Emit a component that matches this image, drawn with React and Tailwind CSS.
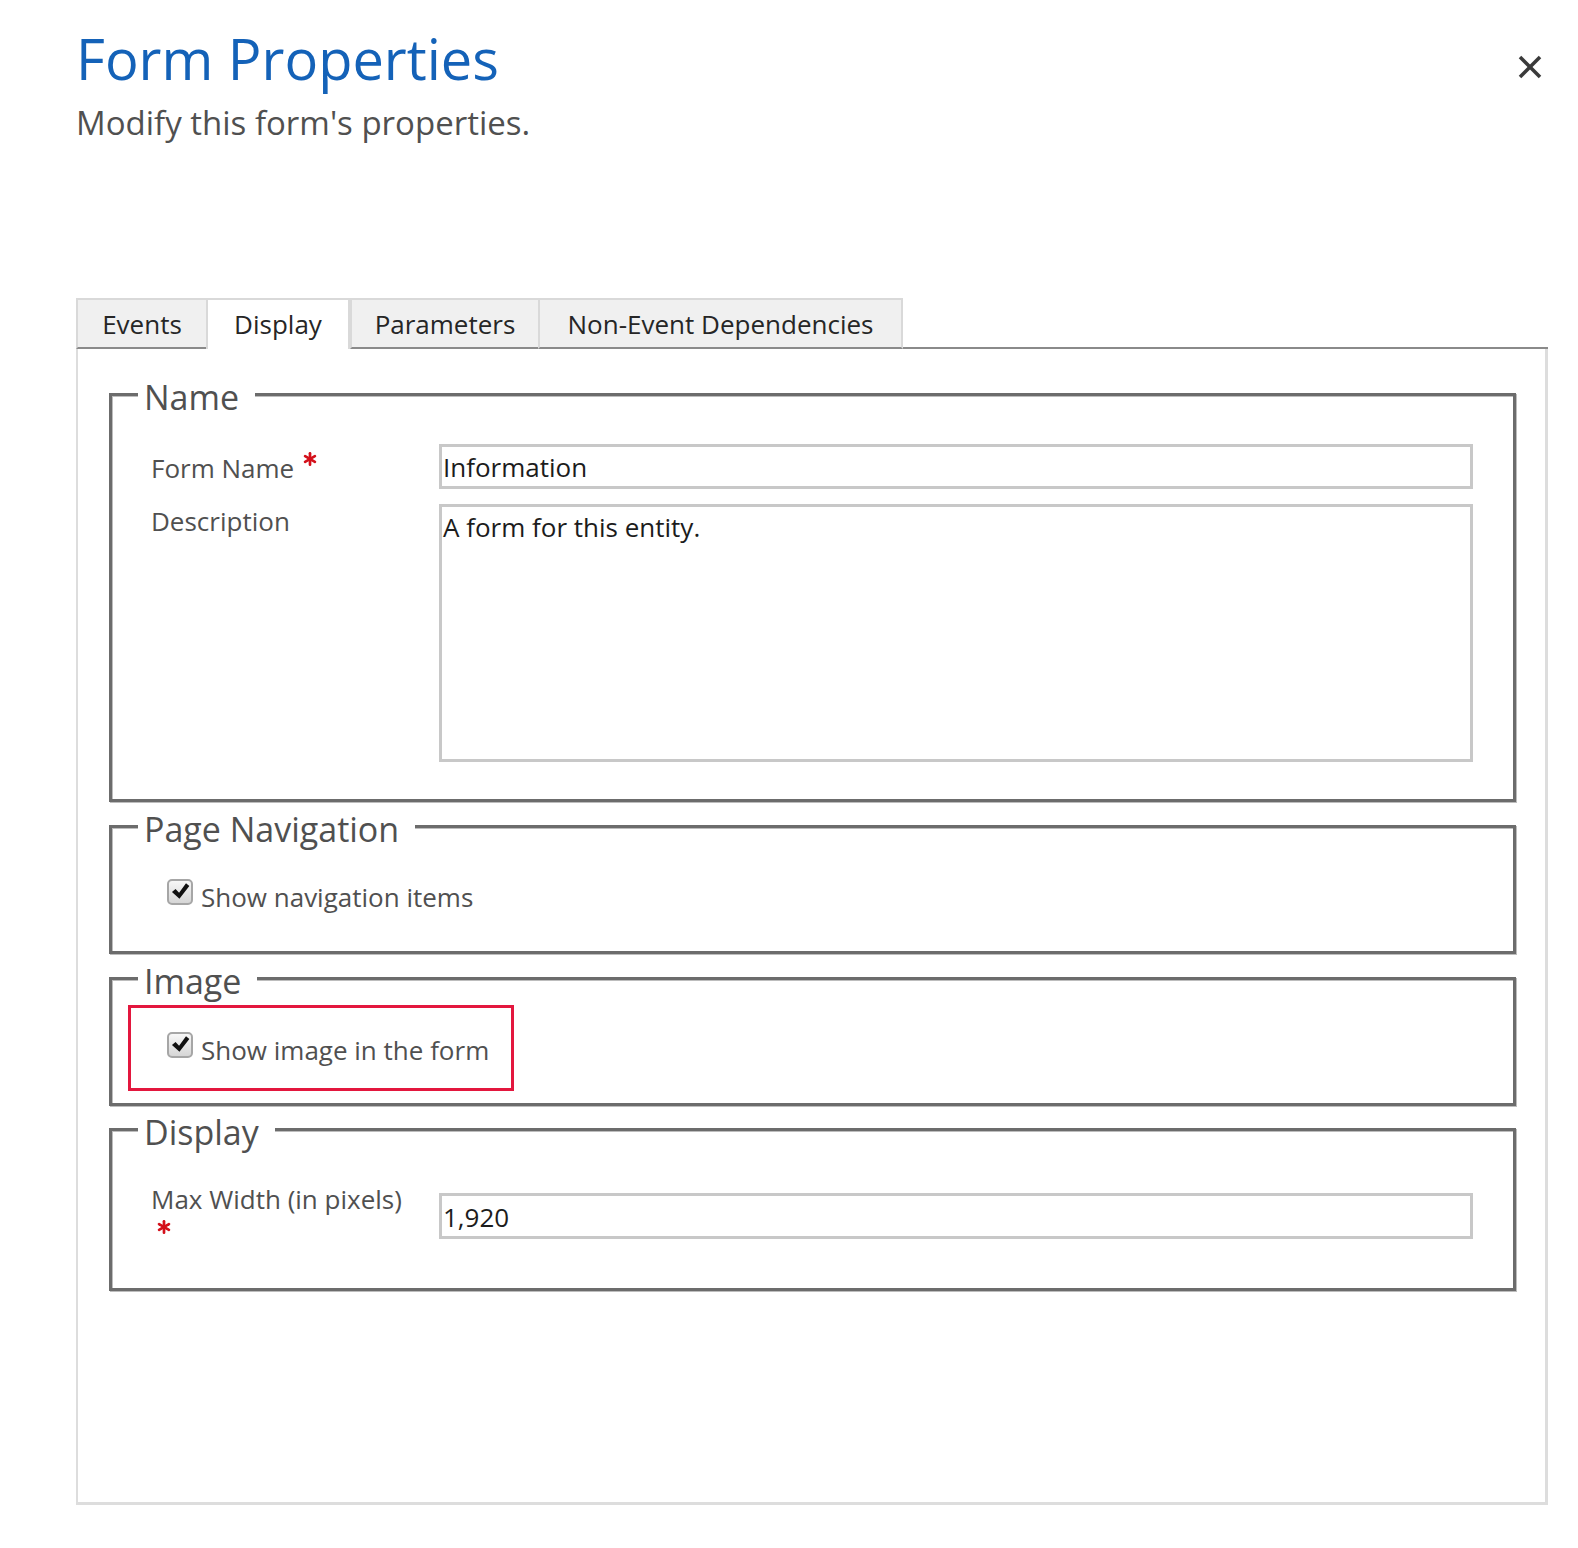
import React from "react";

function Asterisk({ className = "" }) {
  return (
    <svg className={className} width="14" height="14" viewBox="0 0 14 14">
      <g stroke="#d4111b" strokeWidth="2.7" strokeLinecap="round">
        <line x1="7" y1="1.3" x2="7" y2="12.7" />
        <line x1="2.1" y1="4.15" x2="11.9" y2="9.85" />
        <line x1="2.1" y1="9.85" x2="11.9" y2="4.15" />
      </g>
    </svg>
  );
}

function CheckBox() {
  return (
    <div className="w-[26px] h-[26px] shrink-0 rounded-[5px] border-2 border-[#a6a6a6] bg-[linear-gradient(#f7f7f7,#d6d6d6)] flex items-center justify-center">
      <svg width="19" height="19" viewBox="0 0 20 20" className="-mt-[2px]">
        <path d="M1 10.6 L4.8 7.4 L8.5 11.2 L15.8 1.4 L19.3 4.2 L8.9 17.6 Z" fill="#111" />
      </svg>
    </div>
  );
}

function Section({ title, className = "", children }) {
  return (
    <div
      className={
        "relative ml-[31px] mr-[29px] border-[3px] border-[#6c6c6c] shadow-[1px_1px_0_#bdbdbd,inset_1px_1px_0_#bdbdbd] " +
        className
      }
    >
      <span className="absolute -top-[19px] left-[26px] bg-white pl-[6px] pr-[16px] text-[34px] leading-[40px] text-[#505050]">
        {title}
      </span>
      {children}
    </div>
  );
}

const tabBase =
  "h-[51px] flex justify-center pt-[9px] text-[26px] leading-[30px] text-[#262626] border-t-2 border-x-2 border-[#d9d9d9]";

export default function App() {
  return (
    <div className="relative w-[1578px] h-[1548px] bg-white font-['Open_Sans',sans-serif]">
      {/* close */}
      <svg
        className="absolute top-[55px] right-[36px]"
        width="24"
        height="24"
        viewBox="0 0 24 24"
      >
        <g stroke="#3a3a3a" strokeWidth="3.6" strokeLinecap="butt">
          <line x1="2" y1="2" x2="22" y2="22" />
          <line x1="22" y1="2" x2="2" y2="22" />
        </g>
      </svg>

      {/* header */}
      <div className="pl-[76px] pt-[25px]">
        <div className="text-[56px] leading-[66px] text-[#1462b8]">Form Properties</div>
        <div className="mt-[12px] text-[33px] leading-[40px] text-[#505050]">
          Modify this form's properties.
        </div>
      </div>

      {/* tabs + body */}
      <div className="ml-[76px] w-[1472px] mt-[155px]">
        <div className="flex h-[51px]">
          <div className={tabBase + " w-[132px] bg-[#f0f0f0] border-b-2 border-b-[#8a8a8a]"}>Events</div>
          <div className={tabBase + " bg-white -ml-[2px] w-[144px]"}>Display</div>
          <div className={tabBase + " w-[190px] bg-[#f0f0f0] border-b-2 border-b-[#8a8a8a]"}>Parameters</div>
          <div className={tabBase + " w-[365px] -ml-[2px] bg-[#f0f0f0] border-b-2 border-b-[#8a8a8a]"}>
            Non-Event Dependencies
          </div>
          <div className="flex-1 border-b-2 border-[#8a8a8a]" />
        </div>

        <div className="h-[1156px] border-l-2 border-r-[3px] border-b-[3px] border-[#dddddd] pt-[44px] text-[26px]">
          {/* Name */}
          <Section title="Name">
            <div className="pt-[48px] pl-[39px] pr-[40px] pb-[37px]">
              <div className="flex">
                <div className="w-[288px] pt-[9px] leading-[30px] text-[#505050]">
                  Form Name
                  <Asterisk className="inline-block ml-[9px] relative -top-[12px]" />
                </div>
                <div className="flex-1 h-[45px] border-[3px] border-[#c8c8c8] pl-[1px] leading-[41px] text-[#1c1c1c]">
                  Information
                </div>
              </div>
              <div className="flex mt-[15px]">
                <div className="w-[288px] pt-[2px] leading-[30px] text-[#505050]">Description</div>
                <div className="flex-1 h-[258px] border-[3px] border-[#c8c8c8] pl-[1px] leading-[41px] text-[#1c1c1c]">
                  A form for this entity.
                </div>
              </div>
            </div>
          </Section>

          {/* Page Navigation */}
          <Section title="Page Navigation" className="mt-[23px]">
            <div className="flex pt-[51px] pl-[55px] pb-[39px]">
              <CheckBox />
              <span className="ml-[8px] mt-[3px] leading-[30px] text-[#505050]">Show navigation items</span>
            </div>
          </Section>

          {/* Image */}
          <Section title="Image" className="mt-[23px]">
            <div className="ml-[16px] mt-[25px] mb-[12px] w-[386px] h-[86px] border-[3px] border-[#e3173e] pl-[36px] pt-[24px] flex items-start">
              <CheckBox />
              <span className="ml-[8px] mt-[3px] leading-[30px] text-[#505050]">Show image in the form</span>
            </div>
          </Section>

          {/* Display */}
          <Section title="Display" className="mt-[22px]">
            <div className="flex pt-[62px] pl-[39px] pr-[40px] pb-[49px]">
              <div className="w-[288px] -mt-[9px] leading-[30px] text-[#505050]">
                Max Width (in pixels)
                <Asterisk className="block ml-[6px] mt-[6px]" />
              </div>
              <div className="flex-1 h-[46px] border-[3px] border-[#c8c8c8] pl-[1px] leading-[42px] text-[#1c1c1c]">
                1,920
              </div>
            </div>
          </Section>
        </div>
      </div>
    </div>
  );
}
